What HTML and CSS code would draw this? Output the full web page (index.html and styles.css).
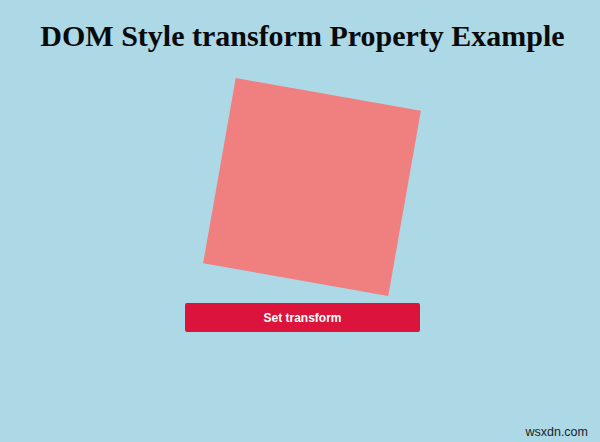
FILE: index.html
```html
<!DOCTYPE html>
<html>
<head>
<meta charset="utf-8">
<link rel="stylesheet" href="styles.css">
</head>
<body>
<main class="page">
  <h1 class="title">DOM Style transform Property Example</h1>
  <div class="box"></div>
  <button class="btn">Set transform</button>
</main>
<div class="watermark">wsxdn.com</div>
</body>
</html>
```
FILE: styles.css
```css
html, body {
  margin: 0;
  padding: 0;
}
body {
  background: #add8e6;
  width: 600px;
  height: 442px;
  overflow: hidden;
  position: relative;
}
.page {
  display: flex;
  flex-direction: column;
  align-items: center;
}
.title {
  font-family: "Liberation Serif", "Times New Roman", serif;
  font-weight: bold;
  font-size: 30px;
  line-height: 36px;
  color: #0a0a0a;
  margin: 18px 0 0 5px;
}
.box {
  width: 188px;
  height: 188px;
  background: #f08080;
  margin: 39px 0 0 24px;
  transform: rotate(10deg);
}
.btn {
  margin: 22px 0 0 5px;
  width: 235px;
  height: 29px;
  border: none;
  border-radius: 2px;
  background: #dc143c;
  color: #fff;
  font-family: "Liberation Sans", Arial, sans-serif;
  font-weight: bold;
  font-size: 12px;
}
.watermark {
  position: absolute;
  right: 12px;
  bottom: 3px;
  font-family: "Liberation Sans", Arial, sans-serif;
  font-size: 12.5px;
  line-height: 14px;
  color: #222;
}
```
